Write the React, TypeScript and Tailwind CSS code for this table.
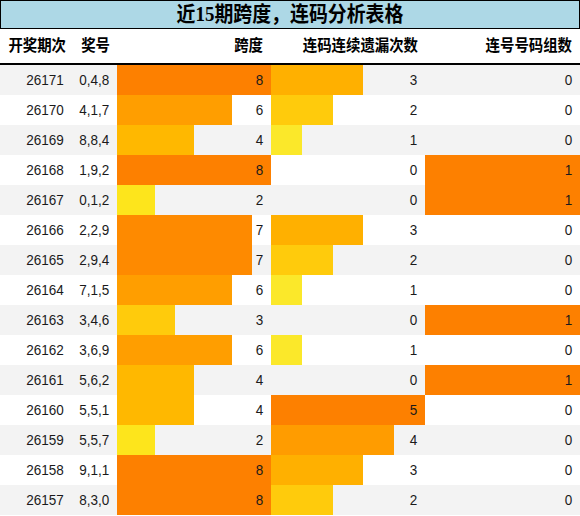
const rows = [
	["26171", "0,4,8", 8, 3, 0],
	["26170", "4,1,7", 6, 2, 0],
	["26169", "8,8,4", 4, 1, 0],
	["26168", "1,9,2", 8, 0, 1],
	["26167", "0,1,2", 2, 0, 1],
	["26166", "2,2,9", 7, 3, 0],
	["26165", "2,9,4", 7, 2, 0],
	["26164", "7,1,5", 6, 1, 0],
	["26163", "3,4,6", 3, 0, 1],
	["26162", "3,6,9", 6, 1, 0],
	["26161", "5,6,2", 4, 0, 1],
	["26160", "5,5,1", 4, 5, 0],
	["26159", "5,5,7", 2, 4, 0],
	["26158", "9,1,1", 8, 3, 0],
	["26157", "8,3,0", 8, 2, 0],
] as const;

const spanColors: Record<number, string> = {
	8: "#fd8000",
	7: "#fe8a00",
	6: "#ff9e00",
	4: "#ffb800",
	3: "#ffcb0c",
	2: "#fde51c",
};

const missColors: Record<number, string> = {
	5: "#fd8000",
	4: "#ff9c00",
	3: "#ffb000",
	2: "#ffcb0c",
	1: "#fbe82a",
};

const groupColors: Record<number, string> = { 1: "#fd8000" };

const barStyle = (value: number, max: number, colors: Record<number, string>) => {
	if (!value) return undefined;
	const pct = (value / max) * 100;
	const c = colors[value];
	return {
		background: `linear-gradient(to right, ${c} 0%, ${c} ${pct}%, transparent ${pct}%)`,
	};
};

// the sheet's text is a touch narrow, so squeeze it from the right edge
const Txt = ({ children }: { children: React.ReactNode }) => (
	<span className="inline-block scale-x-90 origin-right">{children}</span>
);

const BarCell = ({
	value,
	max,
	colors,
}: {
	value: number;
	max: number;
	colors: Record<number, string>;
}) => (
	<div
		className="flex items-center justify-end pr-2 h-full"
		style={barStyle(value, max, colors)}
	>
		<Txt>{value}</Txt>
	</div>
);

const App = () => {
	return (
		<div className="w-[580px] h-[516px] bg-white overflow-hidden font-['Liberation_Sans','Noto_Sans_CJK_SC',sans-serif] text-[#1a1a1a]">
			<div className="h-[29px] bg-[#add8e6] border border-black flex items-center justify-center">
				<h1 className="inline-block scale-x-90 font-bold text-[21px] leading-none text-black font-['Liberation_Serif','Noto_Sans_CJK_SC',serif]">
					近15期跨度，连码分析表格
				</h1>
			</div>

			<div className="pl-px grid grid-cols-[71px_45px_154px_154px_155px] h-[36px] border-b-2 border-black items-center text-right font-bold text-[16px] text-black">
				<div className="pr-[6px]">
					<Txt>开奖期次</Txt>
				</div>
				<div className="pr-[7px]">
					<Txt>奖号</Txt>
				</div>
				<div className="pr-2">
					<Txt>跨度</Txt>
				</div>
				<div className="pr-[7px]">
					<Txt>连码连续遗漏次数</Txt>
				</div>
				<div className="pr-2">
					<Txt>连号号码组数</Txt>
				</div>
			</div>

			{rows.map(([issue, nums, span, miss, group], i) => (
				<div
					key={issue}
					className={`pl-px grid grid-cols-[71px_45px_154px_154px_155px] h-[30px] text-right text-[15px] ${
						i % 2 === 0 ? "bg-[#f3f3f3]" : "bg-white"
					}`}
				>
					<div className="flex items-center justify-end pr-2">
						<Txt>{issue}</Txt>
					</div>
					<div className="flex items-center justify-end pr-2">
						<Txt>{nums}</Txt>
					</div>
					<BarCell value={span} max={8} colors={spanColors} />
					<BarCell value={miss} max={5} colors={missColors} />
					<BarCell value={group} max={1} colors={groupColors} />
				</div>
			))}
		</div>
	);
};

export default App;
